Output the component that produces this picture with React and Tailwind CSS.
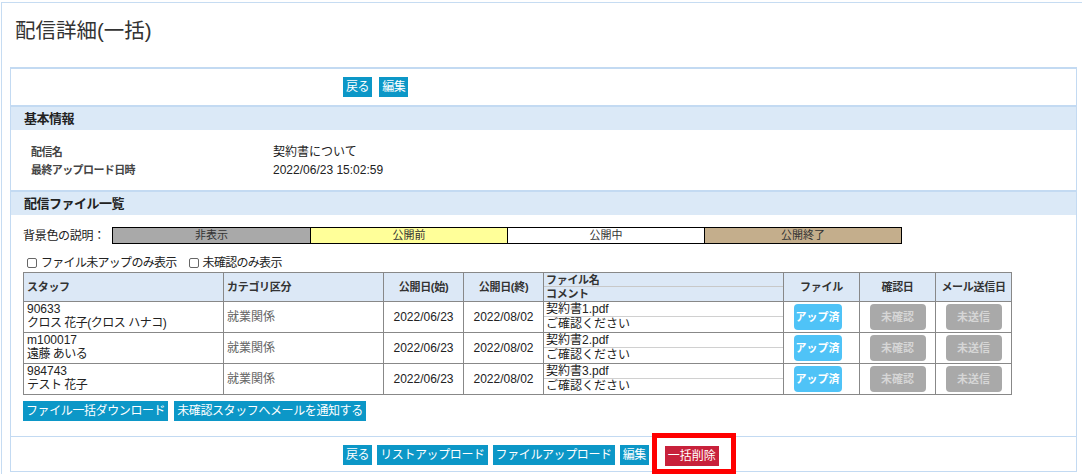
import React from "react";

const btn =
  "inline-block h-[20px] px-[3px] bg-[#0c97c7] text-white text-[12px] leading-[20px] tracking-[-0.4px] whitespace-nowrap";

const rows = [
  { code: "90633", name: "クロス 花子(クロス ハナコ)", file: "契約書1.pdf" },
  { code: "m100017", name: "遠藤 あいる", file: "契約書2.pdf" },
  { code: "984743", name: "テスト 花子", file: "契約書3.pdf" },
];

const legend = [
  { label: "非表示", cls: "bg-[#a9a9a9]" },
  { label: "公開前", cls: "bg-[#ffff99]" },
  { label: "公開中", cls: "bg-white" },
  { label: "公開終了", cls: "bg-[#c4ae8c]" },
];

const Check = ({ label }) => (
  <label className="flex items-center">
    <span className="w-[10px] h-[10px] border border-[#666] rounded-[2px] bg-white" />
    <span className="ml-[4px] text-[12px] tracking-[-0.7px] text-[#222]">{label}</span>
  </label>
);

const SectionHeader = ({ children }) => (
  <div className="border-t-2 border-[#c3daf2] bg-[#dbe9f7] h-[25px] flex items-center pl-[13px] text-[13px] font-bold tracking-[-0.5px] text-[#222]">
    {children}
  </div>
);

export default function App() {
  return (
    <div className="min-h-[474px] bg-white font-['Liberation_Sans','Noto_Sans_CJK_JP',sans-serif] text-[#222]">
      <div className="ml-[1px] pt-[2px]">
        <div className="border-l border-t border-[#c6dcf2] pb-[20px]">
          {/* Title */}
          <h1 className="pt-[14px] pl-[13px] text-[20.5px] leading-[28px] text-[#333] font-normal">
            配信詳細(一括)
          </h1>

          {/* Panel */}
          <div className="mt-[22px] ml-[8px] w-[1067px] border border-t-2 border-[#c3daf2]">
            <div className="flex gap-[7px] pl-[332px] pt-[8px] pb-[8px]">
              <span className={btn}>戻る</span>
              <span className={btn}>編集</span>
            </div>

            <SectionHeader>基本情報</SectionHeader>
            <div className="pt-[13px] pb-[11px] pl-[20px]">
              <div className="flex h-[18px] items-center">
                <div className="w-[242px] text-[11px] font-bold tracking-[-0.6px] text-[#444]">配信名</div>
                <div className="text-[12px] text-[#222]">契約書について</div>
              </div>
              <div className="flex h-[18px] items-center">
                <div className="w-[242px] text-[11px] font-bold tracking-[-0.6px] text-[#444]">最終アップロード日時</div>
                <div className="text-[12px] text-[#222]">2022/06/23 15:02:59</div>
              </div>
            </div>

            <SectionHeader>配信ファイル一覧</SectionHeader>
            <div className="pl-[12px] pt-[12px]">
              <div className="flex items-center h-[17px]">
                <div className="w-[89px] text-[12px] tracking-[-0.3px] text-[#222]">背景色の説明：</div>
                <div className="flex border border-black h-[17px]">
                  {legend.map((l, i) => (
                    <div
                      key={l.label}
                      className={`w-[197px] h-full flex items-center justify-center text-[11px] text-[#333] ${l.cls} ${i > 0 ? "border-l border-black" : ""}`}
                    >
                      {l.label}
                    </div>
                  ))}
                </div>
              </div>

              <div className="flex items-center h-[16px] mt-[11px] pl-[4px] gap-[12px]">
                <Check label="ファイル未アップのみ表示" />
                <Check label="未確認のみ表示" />
              </div>

              <table className="mt-[1px] border-collapse table-fixed w-[988px] text-[12px] text-[#222]">
                <colgroup>
                  <col className="w-[200px]" />
                  <col className="w-[160px]" />
                  <col className="w-[80px]" />
                  <col className="w-[80px]" />
                  <col className="w-[240px]" />
                  <col className="w-[76px]" />
                  <col className="w-[76px]" />
                  <col className="w-[76px]" />
                </colgroup>
                <thead>
                  <tr className="h-[29px] bg-[#dce8f6] text-[11px] font-bold text-[#333] tracking-[-0.3px]">
                    <th className="border border-[#888] text-left pl-[3px] font-bold">スタッフ</th>
                    <th className="border border-[#888] text-left pl-[3px] font-bold">カテゴリ区分</th>
                    <th className="border border-[#888] font-bold">公開日(始)</th>
                    <th className="border border-[#888] font-bold">公開日(終)</th>
                    <th className="border border-[#888] p-0 text-left font-bold">
                      <div className="h-[14px] leading-[14px] pl-[2px] border-b border-[#c8c8c8]">ファイル名</div>
                      <div className="h-[14px] leading-[14px] pl-[2px]">コメント</div>
                    </th>
                    <th className="border border-[#888] font-bold">ファイル</th>
                    <th className="border border-[#888] font-bold">確認日</th>
                    <th className="border border-[#888] font-bold">メール送信日</th>
                  </tr>
                </thead>
                <tbody>
                  {rows.map((r) => (
                    <tr key={r.code} className="h-[31px]">
                      <td className="border border-[#888] align-top pl-[3px] leading-[14px]">
                        <div>{r.code}</div>
                        <div className="tracking-[-0.5px]">{r.name}</div>
                      </td>
                      <td className="border border-[#888] pl-[3px] text-[#666]">就業関係</td>
                      <td className="border border-[#888] text-center">2022/06/23</td>
                      <td className="border border-[#888] text-center">2022/08/02</td>
                      <td className="border border-[#888] p-0">
                        <div className="h-[15px] leading-[15px] pl-[2px] border-b border-[#d0d0d0]">{r.file}</div>
                        <div className="h-[15px] leading-[15px] pl-[2px]">ご確認ください</div>
                      </td>
                      <td className="border border-[#888] text-center pr-[8px]">
                        <span className="inline-block w-[48px] h-[26px] rounded-[4px] bg-[#4fc3f7] text-white text-[11px] font-bold leading-[26px] align-middle">
                          アップ済
                        </span>
                      </td>
                      <td className="border border-[#888] text-center">
                        <span className="inline-block w-[56px] h-[26px] rounded-[4px] bg-[#a9a9a9] text-[#d6d6d6] text-[11px] font-bold leading-[26px] align-middle">
                          未確認
                        </span>
                      </td>
                      <td className="border border-[#888] text-center">
                        <span className="inline-block w-[56px] h-[26px] rounded-[4px] bg-[#a9a9a9] text-[#d6d6d6] text-[11px] font-bold leading-[26px] align-middle">
                          未送信
                        </span>
                      </td>
                    </tr>
                  ))}
                </tbody>
              </table>

              <div className="flex gap-[6px] mt-[6px] pb-[15px]">
                <span className={btn}>ファイル一括ダウンロード</span>
                <span className={btn}>未確認スタッフへメールを通知する</span>
              </div>
            </div>

            <div className="border-t border-[#c3daf2] flex items-center gap-[5px] pl-[332px] pt-[6px] pb-[4px]">
              <span className={btn}>戻る</span>
              <span className={btn}>リストアップロード</span>
              <span className={btn}>ファイルアップロード</span>
              <span className={btn}>編集</span>
              <span className="relative ml-[11px]">
                <span className="inline-block h-[20px] px-[3px] bg-[#c8213b] text-white text-[12px] leading-[20px] whitespace-nowrap">
                  一括削除
                </span>
                <span className="absolute -left-[13px] -top-[10px] w-[84px] h-[41px] border-[5px] border-[#ff0000]" />
              </span>
            </div>
          </div>
        </div>
      </div>
    </div>
  );
}
